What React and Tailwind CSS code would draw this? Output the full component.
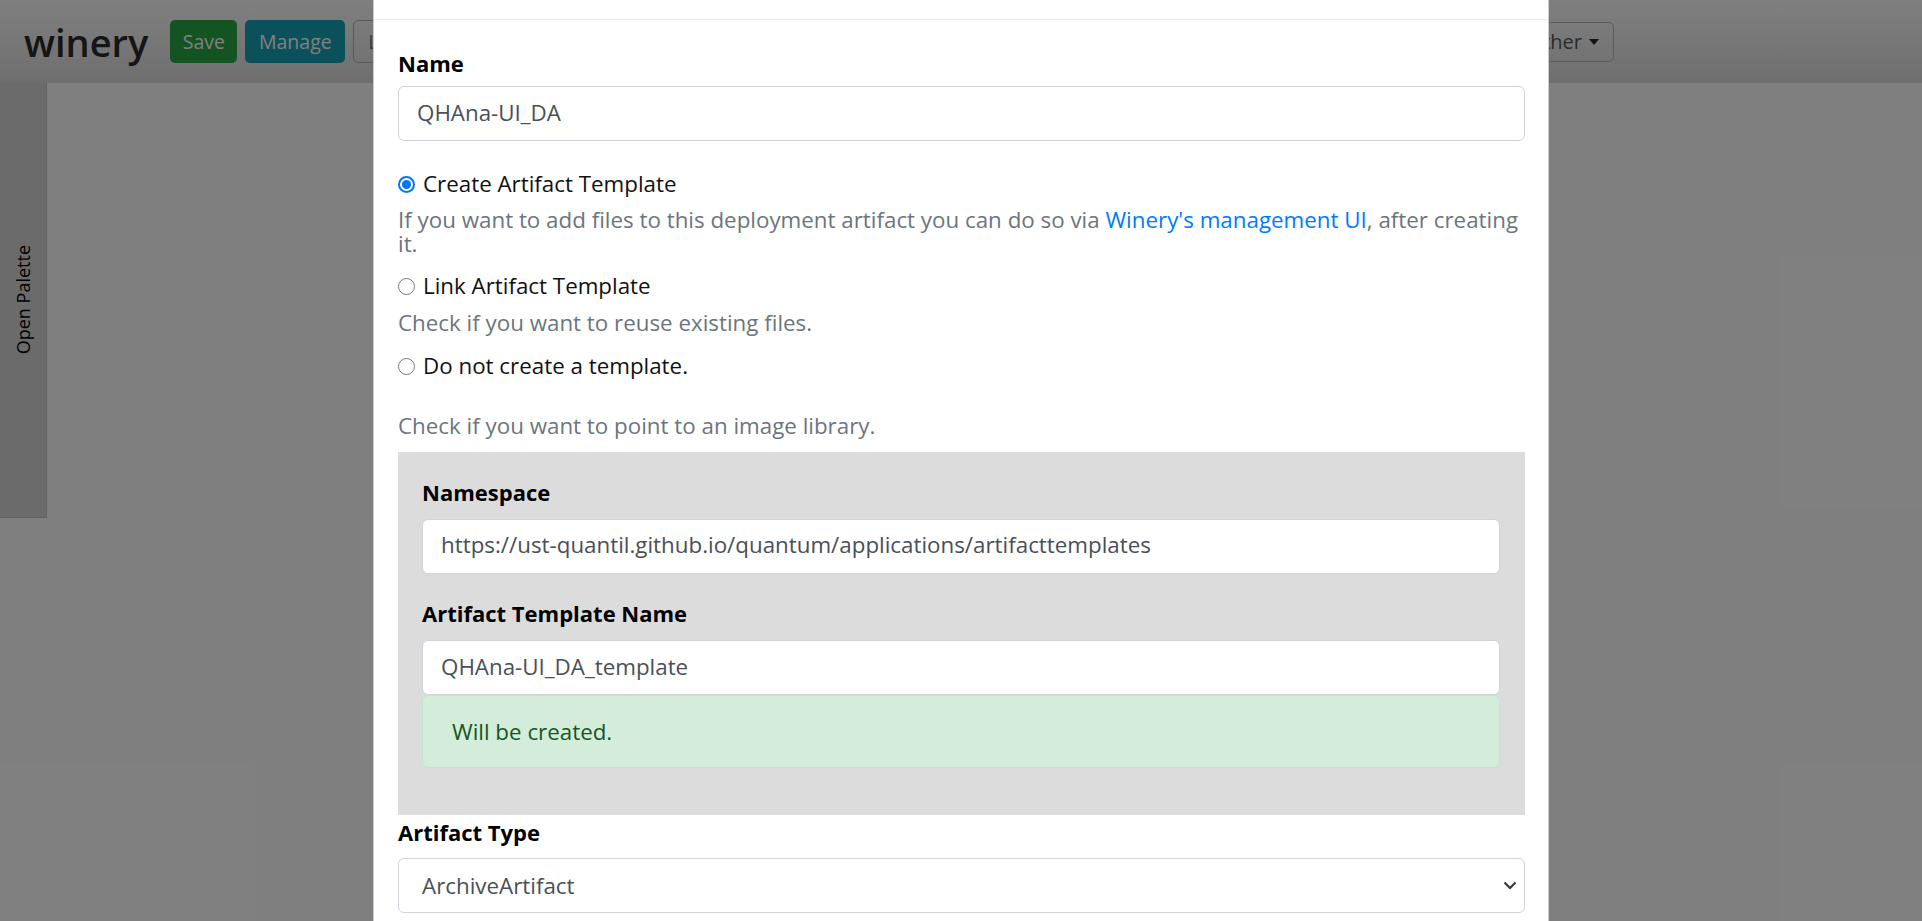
import React from "react";

function Radio({ checked }) {
  return checked ? (
    <span className="flex h-[17px] w-[17px] shrink-0 items-center justify-center rounded-full border-2 border-[#0075ff] bg-white">
      <span className="h-[9px] w-[9px] rounded-full bg-[#0075ff]" />
    </span>
  ) : (
    <span className="h-[17px] w-[17px] shrink-0 rounded-full border-[1.5px] border-[#767676] bg-white" />
  );
}

export default function App() {
  return (
    <div className="relative h-[921px] w-full overflow-hidden bg-white [font-family:'Open_Sans',sans-serif]">
      {/* Page under the backdrop */}
      <div className="flex h-[83px] items-center bg-gradient-to-b from-white to-[#dedede] pl-[24px] pr-[308px]">
        <span className="text-[38px] font-semibold leading-none text-[#2a2a2a]">winery</span>
        <button className="ml-[22px] flex h-[43px] w-[67px] items-center justify-center rounded-[5px] bg-[#28a745] text-[19.5px] text-white">Save</button>
        <button className="ml-[8px] flex h-[43px] w-[100px] items-center justify-center rounded-[5px] bg-[#17a2b8] text-[19.5px] text-white">Manage</button>
        <button className="ml-[8px] flex h-[43px] items-center rounded-[5px] border border-[#adb5bd] px-[14px] text-[19.5px] text-[#6c757d]">Layout</button>
        <div className="flex-1" />
        <button className="flex h-[40px] items-center gap-[7px] rounded-[5px] border border-[#b8b8b8] pl-[13px] pr-[14px] text-[20px] text-[#555]">
          Other
          <span className="h-0 w-0 border-x-[5px] border-t-[6px] border-x-transparent border-t-[#222]" />
        </button>
      </div>
      <div className="flex">
        <div className="flex h-[435px] w-[47px] items-center justify-center border-b border-r border-[#c4c4c4] bg-[#d6d6d6]">
          <span className="rotate-180 text-[18px] text-black [writing-mode:vertical-rl]">Open Palette</span>
        </div>
        <div className="flex-1 bg-white" />
      </div>

      {/* Backdrop */}
      <div className="absolute inset-0 bg-black/50" />

      {/* Modal */}
      <div className="absolute left-[373px] top-0 h-[960px] w-[1176px] border-x border-black/20 bg-white text-[22.35px] text-[#212529]">
        <div className="h-[20px] border-b border-[#e9ecef]" />
        <div className="pl-[24px] pr-[23px]">
          <div className="mt-[26px] text-[22px] font-bold leading-[34px] text-black">Name</div>
          <div className="mt-[6px] flex h-[55px] items-center rounded-[6px] border border-[#ced4da] px-[18px] pb-[2px] text-[#495057]">QHAna-UI_DA</div>

          <div className="mt-[26px] flex h-[34px] items-center">
            <Radio checked />
            <span className="ml-[8px] text-[#111]">Create Artifact Template</span>
          </div>
          <div className="mt-[7px] whitespace-nowrap leading-[24px] text-[#6c757d]">
            If you want to add files to this deployment artifact you can do so via{" "}
            <a className="text-[#007bff]">Winery's management UI</a>, after creating
            <br />
            it.
          </div>

          <div className="mt-[13px] flex h-[34px] items-center">
            <Radio />
            <span className="ml-[8px] text-[#111]">Link Artifact Template</span>
          </div>
          <div className="mt-[3px] leading-[34px] text-[#6c757d]">Check if you want to reuse existing files.</div>

          <div className="mt-[9px] flex h-[34px] items-center">
            <Radio />
            <span className="ml-[8px] text-[#111]">Do not create a template.</span>
          </div>
          <div className="mt-[26px] leading-[34px] text-[#6c757d]">Check if you want to point to an image library.</div>

          <div className="mt-[9px] bg-[#dcdcdc] pb-[47px] pl-[24px] pr-[25px] pt-[23px]">
            <div className="text-[22px] font-bold leading-[34px] text-black">Namespace</div>
            <div className="mt-[10px] flex h-[55px] items-center rounded-[6px] border border-[#ced4da] bg-white px-[18px] pb-[3px] text-[#495057]">
              https://ust-quantil.github.io/quantum/applications/artifacttemplates
            </div>
            <div className="mt-[22px] text-[22px] font-bold leading-[34px] text-black">Artifact Template Name</div>
            <div className="mt-[10px] flex h-[55px] items-center rounded-[6px] border border-[#ced4da] bg-white px-[18px] pb-[2px] text-[#495057]">
              QHAna-UI_DA_template
            </div>
            <div className="flex h-[73px] items-center rounded-[6px] border border-[#c3e6cb] bg-[#d4edda] pl-[29px] text-[#155724]">
              Will be created.
            </div>
          </div>

          <div className="mt-[0px] text-[22px] font-bold leading-[34px] text-black">Artifact Type</div>
          <div className="mt-[9px] flex h-[55px] items-center justify-between rounded-[6px] border border-[#ced4da] pl-[23px] pr-[7px] text-[#495057]">
            <span>ArchiveArtifact</span>
            <svg width="14" height="9" viewBox="0 0 14 9" fill="none">
              <path d="M1.5 1.5 L7 7 L12.5 1.5" stroke="#343a40" strokeWidth="2.2" />
            </svg>
          </div>
        </div>
      </div>
    </div>
  );
}
